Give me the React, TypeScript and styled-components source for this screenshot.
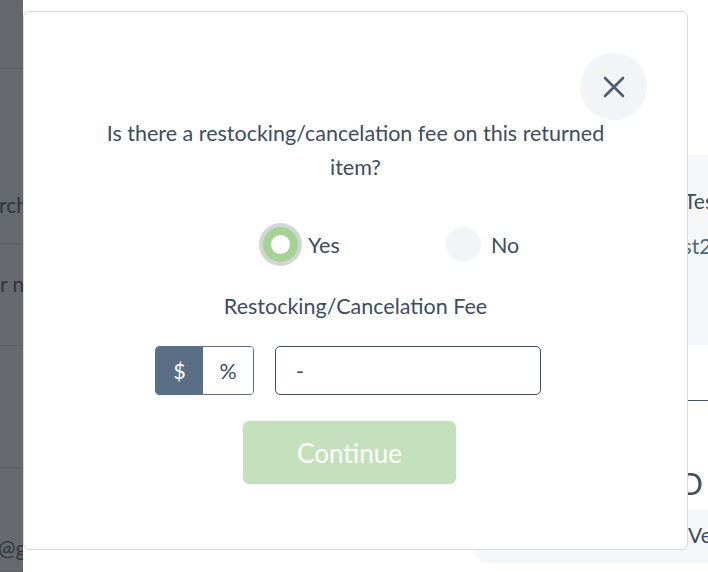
import React from "react";
import styled, { createGlobalStyle } from "styled-components";

const GlobalStyle = createGlobalStyle`
  html, body {
    margin: 0;
    padding: 0;
    background: #ffffff;
  }
  body {
    font-family: "Lato", "Open Sans", sans-serif;
    color: #3e4c60;
  }
  * {
    box-sizing: border-box;
  }
`;

const Page = styled.div`
  position: relative;
  width: 708px;
  height: 572px;
  overflow: hidden;
  background: #ffffff;
`;

const Background = styled.div`
  display: flex;
  height: 100%;
`;

const ListPane = styled.div`
  width: 23px;
  flex-shrink: 0;
  overflow: hidden;
  display: flex;
  flex-direction: column;
  background: #ffffff;
`;

const ListHeader = styled.div`
  height: 69px;
  flex-shrink: 0;
  background: #f8f8f9;
  border-bottom: 1px solid #e3e5e8;
`;

const ListRow = styled.div<{ $h: number; $pad: number }>`
  height: ${(p) => p.$h}px;
  flex-shrink: 0;
  padding-top: ${(p) => p.$pad}px;
  border-bottom: 1px solid #e6e8eb;
  font-size: 21px;
  line-height: 24px;
  color: #6b7280;
  white-space: nowrap;
`;

const Clipped = styled.span<{ $x: number }>`
  display: inline-block;
  margin-left: ${(p) => p.$x}px;
`;

const DetailPane = styled.div`
  flex: 1;
  min-width: 0;
  margin-left: 453px;
  overflow: hidden;
  display: flex;
  flex-direction: column;
  padding-top: 155px;
`;

const InfoCard = styled.div`
  height: 190px;
  background: #f6f7f9;
  padding: 23px 0 0 196px;
  font-size: 21px;
  line-height: 45px;
  white-space: nowrap;
  color: #3e4c60;
`;

const InfoLine = styled.div<{ $tone?: "link"; $x: number }>`
  margin-left: ${(p) => p.$x}px;
  color: ${(p) => (p.$tone === "link" ? "#4d6682" : "#3e4c60")};
`;

const Divider = styled.div`
  margin-top: 55px;
  height: 1px;
  background: #44546a;
`;

const SectionTitle = styled.div`
  margin-top: 65px;
  padding-left: 204px;
  font-size: 30px;
  line-height: 34px;
  white-space: nowrap;
  color: #3e4c60;
`;

const NoteCard = styled.div`
  margin-top: 10px;
  height: 53px;
  background: #f6f7f9;
  border-bottom-left-radius: 10px;
  padding: 13px 0 0 212px;
  font-size: 21px;
  line-height: 24px;
  white-space: nowrap;
  color: #3e4c60;
`;

const Backdrop = styled.div`
  position: absolute;
  left: 0;
  top: 0;
  bottom: 0;
  width: 23px;
  background: rgba(15, 20, 27, 0.64);
`;

const Modal = styled.div`
  position: absolute;
  left: 23px;
  top: 11px;
  width: 665px;
  height: 539px;
  background: #ffffff;
  border: 1px solid #d9dadd;
  border-radius: 6px;
  display: flex;
  flex-direction: column;
  padding: 41px 40px 0 0;
`;

const ModalHeader = styled.div`
  display: flex;
  justify-content: flex-end;
`;

const CloseButton = styled.button`
  width: 67px;
  height: 67px;
  border-radius: 50%;
  border: none;
  background: #f3f4f6;
  display: flex;
  align-items: center;
  justify-content: center;
  padding: 0;
  cursor: pointer;
`;

const Question = styled.p`
  margin: -4px 0 0 40px;
  align-self: center;
  max-width: 520px;
  text-align: center;
  font-size: 21.5px;
  line-height: 34px;
  color: #3e4c60;
`;

const RadioRow = styled.div`
  display: grid;
  grid-template-columns: 183px auto;
  justify-content: start;
  margin-top: 43px;
  padding-left: 239px;
`;

const RadioOption = styled.label`
  display: flex;
  align-items: center;
  gap: 10px;
  font-size: 21.5px;
  color: #3e4c60;
  cursor: pointer;
`;

const RadioDot = styled.span<{ $checked: boolean }>`
  width: 35px;
  height: 35px;
  border-radius: 50%;
  background: ${(p) => (p.$checked ? "#ffffff" : "#f3f4f6")};
  border: ${(p) => (p.$checked ? "8px solid #a5d394" : "none")};
  box-shadow: ${(p) => (p.$checked ? "0 0 0 4px #d3d5d9" : "none")};
`;

const FeeLabel = styled.div`
  margin: 29px 0 0 40px;
  text-align: center;
  font-size: 21.5px;
  line-height: 30px;
  color: #3e4c60;
`;

const FeeRow = styled.div`
  display: flex;
  gap: 21px;
  margin-top: 25px;
  padding-left: 131px;
`;

const UnitToggle = styled.div`
  display: flex;
  height: 49px;
  border: 1px solid #5a6e86;
  border-radius: 4px;
  overflow: hidden;
`;

const UnitButton = styled.button<{ $active: boolean; $w: number }>`
  width: ${(p) => p.$w}px;
  border: none;
  padding: 0;
  background: ${(p) => (p.$active ? "#5a6e86" : "#ffffff")};
  color: ${(p) => (p.$active ? "#ffffff" : "#3e4c60")};
  font-family: "Lato", sans-serif;
  font-size: 21.5px;
  cursor: pointer;
`;

const AmountInput = styled.input`
  width: 266px;
  height: 49px;
  border: 1px solid #3e4c60;
  border-radius: 5px;
  padding: 0 20px;
  font-family: "Lato", sans-serif;
  font-size: 21.5px;
  color: #3e4c60;
  outline: none;
`;

const ContinueButton = styled.button`
  margin: 26px 0 0 219px;
  width: 213px;
  height: 63px;
  border: none;
  border-radius: 6px;
  background: #c5e0bd;
  color: #ffffff;
  font-family: "Lato", sans-serif;
  font-size: 26px;
  align-self: flex-start;
`;

const CloseIcon = () => (
  <svg width="22" height="22" viewBox="0 0 22 22" fill="none">
    <path
      d="M2 2 L20 20 M20 2 L2 20"
      stroke="#4b5d73"
      strokeWidth="2.6"
      strokeLinecap="round"
    />
  </svg>
);

export default function App() {
  const [choice, setChoice] = React.useState<"yes" | "no">("yes");
  const [unit, setUnit] = React.useState<"$" | "%">("$");

  return (
    <>
      <GlobalStyle />
      <Page>
        <Background>
          <ListPane>
            <ListHeader />
            <ListRow $h={175} $pad={124}>
              <Clipped $x={-1}>rch orders</Clipped>
            </ListRow>
            <ListRow $h={102} $pad={28}>
              <Clipped $x={0}>r number</Clipped>
            </ListRow>
            <ListRow $h={122} $pad={0} />
            <ListRow $h={104} $pad={68}>
              <Clipped $x={-2}>@gmail.com</Clipped>
            </ListRow>
          </ListPane>
          <DetailPane>
            <InfoCard>
              <InfoLine $x={12}>Test User</InfoLine>
              <InfoLine $x={-8} $tone="link">
                test2@mail.com
              </InfoLine>
            </InfoCard>
            <Divider />
            <SectionTitle>D Info</SectionTitle>
            <NoteCard>Vendor</NoteCard>
          </DetailPane>
        </Background>

        <Backdrop />

        <Modal>
          <ModalHeader>
            <CloseButton aria-label="Close">
              <CloseIcon />
            </CloseButton>
          </ModalHeader>
          <Question>
            Is there a restocking/cancelation fee on this returned item?
          </Question>
          <RadioRow>
            <RadioOption onClick={() => setChoice("yes")}>
              <RadioDot $checked={choice === "yes"} />
              Yes
            </RadioOption>
            <RadioOption onClick={() => setChoice("no")}>
              <RadioDot $checked={choice === "no"} />
              No
            </RadioOption>
          </RadioRow>
          <FeeLabel>Restocking/Cancelation Fee</FeeLabel>
          <FeeRow>
            <UnitToggle>
              <UnitButton $w={47} $active={unit === "$"} onClick={() => setUnit("$")}>
                $
              </UnitButton>
              <UnitButton $w={50} $active={unit === "%"} onClick={() => setUnit("%")}>
                %
              </UnitButton>
            </UnitToggle>
            <AmountInput defaultValue="-" />
          </FeeRow>
          <ContinueButton disabled>Continue</ContinueButton>
        </Modal>
      </Page>
    </>
  );
}
